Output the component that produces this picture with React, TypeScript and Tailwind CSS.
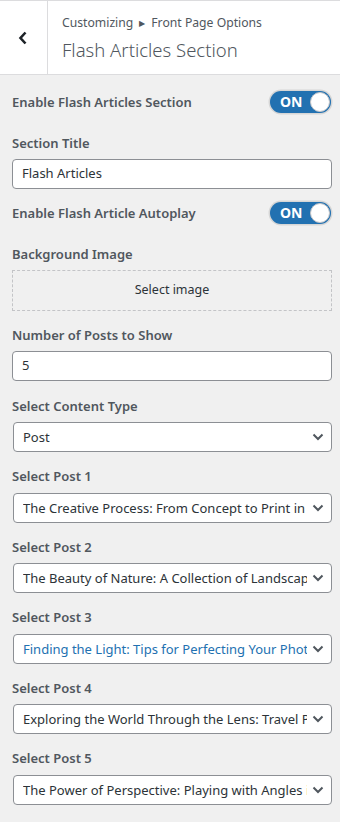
import React from "react";

const font = { fontFamily: '"Noto Sans", "Open Sans", sans-serif' };

function Toggle() {
  return (
    <div className="flex h-[22px] w-[61px] items-center justify-between rounded-full bg-[#2271b1] pl-[10px] pr-[1px] shadow-[0_0_0_1.5px_#d6d6d6]">
      <span className="text-[14px] font-bold leading-none text-white">ON</span>
      <span className="h-[20px] w-[20px] rounded-full border border-[#c3c4c7] bg-white" />
    </div>
  );
}

function Chevron() {
  return (
    <svg width="12" height="8" viewBox="0 0 12 8" className="shrink-0">
      <path d="M1.5 1.5 L6 6 L10.5 1.5" fill="none" stroke="#50575e" strokeWidth="2" />
    </svg>
  );
}

function Label({ children }: { children: React.ReactNode }) {
  return (
    <div className="text-[13px] font-semibold leading-[18px] text-[#50575e]">{children}</div>
  );
}

function SelectBox({ text, blue }: { text: string; blue?: boolean }) {
  return (
    <div className="ml-px mt-[7.5px] flex h-[30px] items-center rounded-[4px] border border-[#8c8f94] bg-white pl-[9px] pr-[7px]">
      <span
        className={
          "mr-[5px] min-w-0 flex-1 overflow-hidden whitespace-nowrap text-[13px] leading-[18px] " +
          (blue ? "text-[#2271b1]" : "text-[#2c3338]")
        }
      >
        {text}
      </span>
      <Chevron />
    </div>
  );
}

function InputBox({ text }: { text: string }) {
  return (
    <div className="mt-[7px] flex h-[30px] items-center rounded-[4px] border border-[#8c8f94] bg-white px-[9px] text-[13px] text-[#2c3338]">
      {text}
    </div>
  );
}

export default function App() {
  const posts = [
    "The Creative Process: From Concept to Print in Photography",
    "The Beauty of Nature: A Collection of Landscape Photographs",
    "Finding the Light: Tips for Perfecting Your Photography",
    "Exploring the World Through the Lens: Travel Photography",
    "The Power of Perspective: Playing with Angles in Photography",
  ];
  return (
    <div className="min-h-screen bg-[#f0f0f0]" style={font}>
      <div className="flex h-[75px] border-y border-[#dcdcde] bg-white">
        <div className="flex w-[48px] items-center justify-center border-r border-[#dcdcde] pr-[2px]">
          <svg width="10" height="14" viewBox="0 0 10 14">
            <path d="M7.5 1.5 L2.5 7 L7.5 12.5" fill="none" stroke="#1d2327" strokeWidth="2.6" />
          </svg>
        </div>
        <div className="pl-[14px] pt-[13px]">
          <div className="flex items-center text-[12.2px] leading-[18px] text-[#50575e]">
            <span>Customizing</span>
            <span className="mx-[6px] text-[8px]">▶</span>
            <span>Front Page Options</span>
          </div>
          <div className="mt-[4px] text-[18.5px] font-light leading-[28px] text-[#50575e]">
            Flash Articles Section
          </div>
        </div>
      </div>

      <div className="pb-[12px] pl-[12px] pr-[8px] pt-[15px]">
        <div className="flex h-[24px] items-center justify-between pr-[1px]">
          <Label>Enable Flash Articles Section</Label>
          <Toggle />
        </div>

        <div className="mt-[20px]">
          <Label>Section Title</Label>
          <InputBox text="Flash Articles" />
        </div>

        <div className="mt-[12px] flex h-[24px] items-center justify-between pr-[1px]">
          <Label>Enable Flash Article Autoplay</Label>
          <Toggle />
        </div>

        <div className="mt-[20px]">
          <Label>Background Image</Label>
          <div className="mt-[7px] flex h-[41px] items-center justify-center border border-dashed border-[#c3c4c7] text-[12.5px] text-[#2c3338]">
            Select image
          </div>
        </div>

        <div className="mt-[15px]">
          <Label>Number of Posts to Show</Label>
          <InputBox text="5" />
        </div>

        <div className="mt-[15.5px]">
          <Label>Select Content Type</Label>
          <SelectBox text="Post" />
        </div>

        {posts.map((p, i) => (
          <div key={i} className="mt-[15px]">
            <Label>Select Post {i + 1}</Label>
            <SelectBox text={p} blue={i === 2} />
          </div>
        ))}
      </div>
    </div>
  );
}
